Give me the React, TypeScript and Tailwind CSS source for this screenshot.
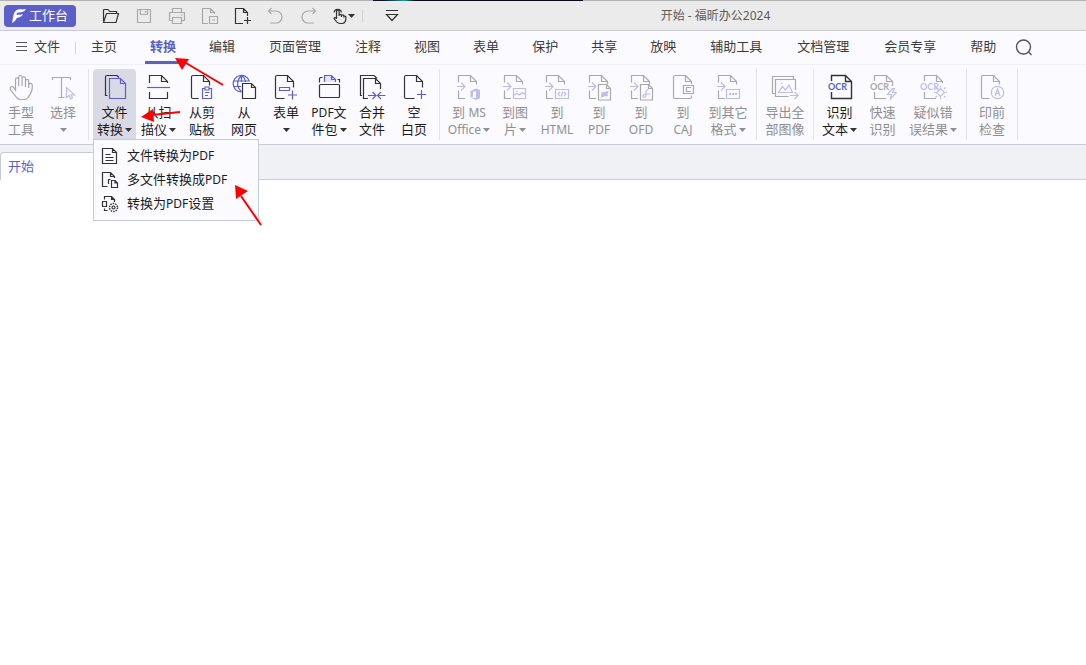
import type { ReactNode } from 'react'

const INK = '#333333'
const BLUE = '#5b5fc7'
const GRAY = '#a9a9ac'
const LILAC = '#bcbdea'

type Item = {
  lines: string[]
  icon: ReactNode
  width: string
  caret?: boolean
  disabled?: boolean
  active?: boolean
}

// latin runs are set one size smaller than the Chinese text around them
function Mixed({ text }: { text: string }) {
  return (
    <span>
      {text.split(/([A-Za-z]+)/).map((part, i) =>
        i % 2 ? <span key={i} className="text-[12px]">{part}</span> : part
      )}
    </span>
  )
}

function Caret({ className = '' }: { className?: string }) {
  return (
    <svg width="7" height="4" viewBox="0 0 7 4" className={className} fill="currentColor" aria-hidden="true">
      <path d="M0 0h7L3.5 4z" />
    </svg>
  )
}

function Icon({ size = 28, color = INK, children }: { size?: number; color?: string; children: ReactNode }) {
  return (
    <svg
      width={size}
      height={size}
      viewBox={`0 0 ${size} ${size}`}
      fill="none"
      stroke={color}
      strokeWidth="1.2"
      className="shrink-0"
      aria-hidden="true"
    >
      {children}
    </svg>
  )
}

// page with a folded corner, left open at the bottom right for a badge
function Page({ x = 3.5, foot = 7, right = 10 }: { x?: number; foot?: number; right?: number }) {
  return (
    <g transform={`translate(${x} 2.5)`}>
      <path d={`M18 ${right}V6L12 0H1.5Q0 0 0 1.5V21.5Q0 23 1.5 23H${foot}`} />
      <path d="M12 0V6H18" />
    </g>
  )
}

// page with an arrow entering from the left
function Export({ x = 3.5 }: { x?: number }) {
  return (
    <>
      <g transform={`translate(${x} 2.5)`}>
        <path d="M0 7V0H12L18 6V9M12 0V6H18M0 15V23H6.5" />
      </g>
      <path d={`M${x - 1.5} 13.5h8M${x + 2.5} 9.5l4 4-4 4`} stroke={LILAC} />
    </>
  )
}

function Ocr({ x = 1, color }: { x?: number; color: string }) {
  return (
    <text
      x={x}
      y="17"
      fontSize="9"
      fontWeight="700"
      fontFamily="Lato, sans-serif"
      fill={color}
      stroke="none"
    >
      OCR
    </text>
  )
}

const groups: Item[][] = [
  [
    {
      lines: ['手型', '工具'],
      width: 'w-[42px]',
      disabled: true,
      icon: (
        <Icon color={GRAY}>
          <path d="M8.5 15V6.5a1.6 1.6 0 0 1 3.2 0V13M11.7 7V4.2a1.7 1.7 0 0 1 3.4 0V13M15.1 5.5a1.7 1.7 0 0 1 3.4 0V14M18.5 8a1.6 1.6 0 0 1 3.2 0V15M21.7 12.5a1.8 1.8 0 0 1 3.6-.5c.3 5-1.3 9-4.3 12.5-1 1.4-2 2-3.5 2h-4c-2 0-3.2-.8-4.2-2.3L3.6 17c-.8-1.4-.4-2.8.7-3.2 1.2-.4 2.3.2 3 1.4l1.2 2V14" />
        </Icon>
      ),
    },
    {
      lines: ['选择'],
      width: 'w-[42px]',
      caret: true,
      disabled: true,
      icon: (
        <Icon color={GRAY}>
          <path d="M3.5 7V4.5H21.5V7M12.5 4.5V24.5M9.5 24.5H15.5" />
          <path d="M17.5 14.5v10l2.5-2 1.5 3.5 2-1-1.5-3.2h3.5z" stroke={LILAC} />
        </Icon>
      ),
    },
  ],
  [
    {
      lines: ['文件', '转换'],
      width: 'w-[43px]',
      caret: true,
      active: true,
      icon: (
        <Icon>
          <path d="M16 2.5H6Q4.5 2.5 4.5 4V22.5H6.5M16 2.5L18 4.5" />
          <path d="M8.5 5.5H19.5L24.5 10.5V25.5H8.5zM19.5 5.5V10.5H24.5" stroke={BLUE} />
        </Icon>
      ),
    },
    {
      lines: ['从扫', '描仪'],
      width: 'w-[45px]',
      caret: true,
      icon: (
        <Icon>
          <path d="M4.5 10V2.5H16.5L22.5 8.5V10M16.5 2.5V8.5H22.5M4.5 19V25.5H22.5V19" />
          <path d="M2 14.5H25" stroke={BLUE} />
        </Icon>
      ),
    },
    {
      lines: ['从剪', '贴板'],
      width: 'w-[42px]',
      icon: (
        <Icon>
          <Page />
          <path d="M17 15.5H14.5V25.5H23.5V15.5H21M17 14h4v3h-4zM17 19.5h4.5M17 22.5h3" stroke={BLUE} />
        </Icon>
      ),
    },
    {
      lines: ['从', '网页'],
      width: 'w-[42px]',
      icon: (
        <Icon>
          <g stroke={BLUE}>
            <path d="M19.5 8.5A8.3 8.3 0 1 0 11 19M3.5 8H19M3.5 13.5H11M11.5 2.5V9" />
            <path d="M15.5 9c-.5-3-2-5.5-4-6.5-5 5-5 11 0 16.5" />
          </g>
          <path d="M12.5 10.5H21.5L25.5 14.5V25.5H12.5zM21.5 10.5V14.5H25.5" />
        </Icon>
      ),
    },
    {
      lines: ['表单'],
      width: 'w-[42px]',
      caret: true,
      icon: (
        <Icon>
          <Page foot={9} right={12} />
          <path d="M7.5 14.5h10v3h-10zM20.5 17.5v9M16 22h9" stroke={BLUE} />
        </Icon>
      ),
    },
    {
      lines: ['PDF文', '件包'],
      width: 'w-[44px]',
      caret: true,
      icon: (
        <Icon>
          <rect x="4.5" y="11.5" width="20" height="13" rx="1" />
          <path d="M4.5 9.5V5.5Q4.5 4.5 5.5 4.5H7.5M24.5 9.5V6.5H22.5" />
          <path d="M9.5 9V2.5H16.5L20.5 6.5V9M16.5 2.5V6.5H20.5" stroke={BLUE} fill="#e4e4fb" />
        </Icon>
      ),
    },
    {
      lines: ['合并', '文件'],
      width: 'w-[42px]',
      icon: (
        <Icon>
          <path d="M16 2.5H2.5V22.5H4M16 2.5L19 5.5" />
          <path d="M10 25.5H5.5V5.5H17.5L22.5 10.5V16M17.5 5.5V10.5H22.5" />
          <path d="M10 22.5h8M14.5 19l3.5 3.5-3.5 3.5M27.5 22.5h-8M23 19l-3.5 3.5 3.5 3.5" stroke={BLUE} />
        </Icon>
      ),
    },
    {
      lines: ['空', '白页'],
      width: 'w-[42px]',
      icon: (
        <Icon>
          <Page x={4.5} foot={10} right={12} />
          <path d="M21.5 17v9M17 21.5h9" stroke={BLUE} />
        </Icon>
      ),
    },
  ],
  [
    {
      lines: ['到 MS', 'Office'],
      width: 'w-[50px]',
      caret: true,
      disabled: true,
      icon: (
        <Icon color={GRAY}>
          <Export />
          <path d="M15.5 18L21 15.5l4 1.5v8.5L21 27l-5.5-2.5 5.5.5v-7l-3 1v4.5l-2.5 1z" fill={LILAC} stroke="none" />
        </Icon>
      ),
    },
    {
      lines: ['到图', '片'],
      width: 'w-[42px]',
      caret: true,
      disabled: true,
      icon: (
        <Icon color={GRAY}>
          <Export />
          <path d="M12.5 15.5h12v10h-12zM12.5 22.5l3-2 3 1.5 3-2.5 3 2M16 17.5v1.5" stroke={LILAC} />
        </Icon>
      ),
    },
    {
      lines: ['到', 'HTML'],
      width: 'w-[42px]',
      disabled: true,
      icon: (
        <Icon color={GRAY}>
          <Export />
          <path d="M12.5 16.5h13v9h-13zM17 19l-2 2 2 2M21 19l2 2-2 2M19.8 18.5l-1.6 5" stroke={LILAC} />
        </Icon>
      ),
    },
    {
      lines: ['到', 'PDF'],
      width: 'w-[42px]',
      disabled: true,
      icon: (
        <Icon color={GRAY}>
          <Export x={4.5} />
          <path d="M13.5 11.5H21.5L25.5 15.5V27H13.5zM21.5 11.5V15.5H25.5" />
          <path d="M15 25c1.5-1.5 1-3 1.5-4.5l-.5-1.5c2 .5 5 0 8-1.5-1 1.5-1 2.5-1.5 4l.5 2c-2-.5-5 0-8 1.5z" fill={LILAC} stroke="none" />
        </Icon>
      ),
    },
    {
      lines: ['到', 'OFD'],
      width: 'w-[42px]',
      disabled: true,
      icon: (
        <Icon color={GRAY}>
          <Export x={4.5} />
          <path d="M13.5 11.5H21.5L25.5 15.5V27H13.5zM21.5 11.5V15.5H25.5" />
          <path d="M21.5 16.5c-2 0-2.5 1-2.5 3v3c0 2-3 2.5-3 .5s1.5-2 3-2h4.5" stroke={LILAC} />
        </Icon>
      ),
    },
    {
      lines: ['到', 'CAJ'],
      width: 'w-[42px]',
      disabled: true,
      icon: (
        <Icon color={GRAY}>
          <path d="M22.5 11V8.5L16.5 2.5H6Q4.5 2.5 4.5 4V23.5Q4.5 25.5 6 25.5H21Q22.5 25.5 22.5 24V22.5M16.5 2.5V8.5H22.5" />
          <path d="M14.5 12.5h10v8h-10zM22 14.5h-4.5v4H22" />
        </Icon>
      ),
    },
    {
      lines: ['到其它', '格式'],
      width: 'w-[48px]',
      caret: true,
      disabled: true,
      icon: (
        <Icon color={GRAY}>
          <Export x={4.5} />
          <path d="M12.5 16.5h13v9h-13z" stroke={LILAC} />
          <path d="M15 20h2v2h-2zM18 20h2v2h-2zM21 20h2v2h-2z" fill={LILAC} stroke="none" />
        </Icon>
      ),
    },
  ],
  [
    {
      lines: ['导出全', '部图像'],
      width: 'w-[48px]',
      disabled: true,
      icon: (
        <Icon color={GRAY}>
          <path d="M4 20.5H1.5V3.5H22.5V6" />
          <path d="M17.5 23.5H4.5V6.5H24.5V17" />
          <path d="M7.5 19.5l4-6 3 3.5 3.5-5 3.5 7.5zM10 10.5h1.5M19 22.5h8M23.5 19l3.5 3.5-3.5 3.5" stroke={LILAC} />
        </Icon>
      ),
    },
  ],
  [
    {
      lines: ['识别', '文本'],
      width: 'w-[43px]',
      caret: true,
      icon: (
        <Icon>
          <path d="M5.5 8V2.5H19.5L25.5 8.5V25.5H5.5V19M19.5 2.5V8.5H25.5" strokeWidth="1.4" />
          <Ocr x={2} color={BLUE} />
        </Icon>
      ),
    },
    {
      lines: ['快速', '识别'],
      width: 'w-[43px]',
      disabled: true,
      icon: (
        <Icon color={GRAY}>
          <path d="M5.5 8V2.5H17.5L23.5 8.5V13M17.5 2.5V8.5H23.5M5.5 19V25.5H17" />
          <Ocr color={GRAY} />
          <path d="M23.5 15.5l-5 6h4l-1 4.5 6-6.5h-4l2-4z" stroke={LILAC} />
        </Icon>
      ),
    },
    {
      lines: ['疑似错', '误结果'],
      width: 'w-[58px]',
      caret: true,
      disabled: true,
      icon: (
        <Icon color={GRAY}>
          <path d="M5.5 8V2.5H17.5L23.5 8.5V10M17.5 2.5V8.5H23.5M5.5 19V25.5H17" />
          <Ocr color={LILAC} />
          <g stroke={LILAC}>
            <path d="M21.5 15.5l4 4-4 4-4-4z" />
            <path d="M21.5 13v1.5M21.5 24.5v2M15 19.5h1.5M26.5 19.5h1.5M16.5 14.5l1.5 1.5M25 23l1.5 1.5M26.5 14.5l-1.5 1.5M18 23l-1.5 1.5" />
          </g>
        </Icon>
      ),
    },
  ],
  [
    {
      lines: ['印前', '检查'],
      width: 'w-[42px]',
      disabled: true,
      icon: (
        <Icon color={GRAY}>
          <Page foot={8} right={9} />
          <circle cx="19.5" cy="19.5" r="6.2" stroke={LILAC} />
          <path d="M17 23l2.5-7 2.5 7M18 20.5h3" stroke={LILAC} />
        </Icon>
      ),
    },
  ],
]

const quickActions: { label: string; icon: ReactNode; off?: boolean }[] = [
  {
    label: '打开',
    icon: <path d="M1.5 14V3.5Q1.5 2.5 2.5 2.5H6L7.5 4.5H14.5V6.5M1.5 15.5L4.5 6.5H16.5L14 15.5z" />,
  },
  { label: '保存', off: true, icon: <path d="M2.5 2.5h13v13h-13zM5.5 2.5v5h7v-5M10.5 4v2" /> },
  {
    label: '打印',
    off: true,
    icon: <path d="M4.5 5.5v-4h9v4M4.5 13.5h-3v-8h15v8h-3M4.5 10.5h9v6h-9zM13 8h1.5" />,
  },
  {
    label: '页面',
    off: true,
    icon: <path d="M7 16.5H1.5V1.5H9.5L13.5 5.5V7M9.5 1.5V5.5H13.5M8.5 9.5h8v7h-8zM11 13h3" />,
  },
  { label: '新建', icon: <path d="M9 16.5H1.5V1.5H9.5L13.5 5.5V9M9.5 1.5V5.5H13.5M13.5 10v7M10 13.5h7" /> },
  { label: '撤销', off: true, icon: <path d="M4.5 1L1.5 4l3 3M1.5 4H9a6 6 0 0 1 0 12H3" /> },
  { label: '重做', off: true, icon: <path d="M12.5 1l3 3-3 3M15.5 4H8a6 6 0 0 0 0 12h6" /> },
]

const tabs = [
  '主页', '转换', '编辑', '页面管理', '注释', '视图', '表单', '保护',
  '共享', '放映', '辅助工具', '文档管理', '会员专享', '帮助',
]

const menuItems: { label: string; icon: ReactNode }[] = [
  {
    label: '文件转换为PDF',
    icon: <path d="M1.5 1.5H11.5L15.5 5.5V16.5H1.5zM11.5 1.5V5.5H15.5M4.5 7.5h5M4.5 10.5h8M4.5 13.5h8" />,
  },
  {
    label: '多文件转换成PDF',
    icon: (
      <path d="M6.5 15.5H1.5V1.5H9.5L13.5 5.5V7M9.5 1.5V5.5H13.5M7.5 13V8.5H9.5M10.5 9.5H14L16.5 12V16.5H10.5zM14 9.5V12H16.5" />
    ),
  },
  {
    label: '转换为PDF设置',
    icon: (
      <>
        <path d="M3.5 4.5V1.5H10.5L13.5 4.5V7M10.5 1.5V4.5H13.5M1.5 6.5h4v5h-4zM3.5 13.5v2h3" />
        <circle cx="12.5" cy="12.5" r="4" strokeWidth="1.5" strokeDasharray="1.5 1" />
        <circle cx="12.5" cy="12.5" r="1.5" />
      </>
    ),
  },
]

function RibbonButton({ item }: { item: Item }) {
  const [first, second] = item.lines
  return (
    <button
      disabled={item.disabled}
      className={`${item.width} flex h-[71px] flex-col items-center pt-1 whitespace-nowrap ${
        item.active ? 'rounded-t-sm bg-[#d9dae5]' : ''
      } ${item.disabled ? 'text-[#8f8f92]' : 'text-[#1c1c1c]'}`}
    >
      {item.icon}
      <span className="mt-[3px] h-[17px] leading-[17px]"><Mixed text={first} /></span>
      <span className="flex h-[17px] items-center gap-[2px] leading-[17px]">
        {second && <Mixed text={second} />}
        {item.caret && <Caret className={item.disabled ? '' : 'text-[#333333]'} />}
      </span>
    </button>
  )
}

function TitleBar() {
  return (
    <header className="flex h-[31px] items-center border-t border-b border-t-[#b3b1b1] border-b-[#c6cad9] bg-[#ebebeb]">
      <button className="ml-1 flex h-[22px] w-[72px] items-center gap-[3px] rounded bg-[#5b5fc7] pl-2 text-white">
        <svg width="14" height="14" viewBox="0 0 14 14" fill="#fff" aria-hidden="true">
          <path d="M0 14C1.5 8 1 2 6 .5 8.5 0 11 .8 14 0 13 2.5 10.5 3.2 6.5 3.5c-1.5 0-2 1-2 2.2 2 .3 4 0 6.5-.5-1 2.3-3.5 3.3-6 3.5C4 10.8 2.5 12.8 0 14z" />
        </svg>
        工作台
      </button>
      <div className="ml-[26px] flex items-center gap-[15px]">
        {quickActions.map(a => (
          <button key={a.label} aria-label={a.label} disabled={a.off}>
            <Icon size={18} color={a.off ? GRAY : INK}>{a.icon}</Icon>
          </button>
        ))}
      </div>
      <button aria-label="手型" className="ml-3 flex items-center text-[#333333]">
        <Icon size={18}>
          <path d="M6.5 12V4.5a1.3 1.3 0 0 1 2.6 0V9M9.1 8.5a1.2 1.2 0 0 1 2.4 0V10M11.5 9a1.2 1.2 0 0 1 2.4 0v1.5M13.9 10a1 1 0 0 1 2 0c.1 3-.2 6-3.4 6.5h-3c-2.5 0-3.5-2.5-5.5-5 .5-1.5 1.8-1 2.5 0M4 5.5a3.8 3.8 0 0 1 7.5 0" />
        </Icon>
        <Caret />
      </button>
      <span className="ml-[7px] h-3 w-px bg-[#cfcfcf]" />
      <button aria-label="自定义" className="ml-5">
        <Icon size={18}>
          <path d="M3 3.5h12M3.5 7.5L9 13.5l5.5-6z" />
        </Icon>
      </button>
      <h1 className="flex-1 pr-14 text-center text-xs text-[#5a5a5a]">开始 - 福昕办公2024</h1>
    </header>
  )
}

function TabRow() {
  return (
    <nav className="flex h-[34px] items-center border-b border-[#f0f0f5] bg-[#fbfbff] whitespace-nowrap text-[#3c3c3c]">
      <button className="ml-4 flex items-center gap-[7px] pb-px">
        <svg width="11" height="10" viewBox="0 0 11 10" stroke="#555" aria-hidden="true">
          <path d="M0 .5h11M0 4.5h11M0 8.5h11" />
        </svg>
        文件
      </button>
      <span className="ml-[15px] h-3 w-px bg-[#d5d5dc]" />
      <div className="ml-[15px] flex h-full gap-[33px]">
        {tabs.map(t => (
          <button
            key={t}
            className={`${
              t === '转换'
                ? '-mx-[5px] border-b-[3px] border-[#5b5fc7] px-[5px] pt-px font-bold text-[#5b5fc7]'
                : 'pb-[2px]'
            } ${t.length === 4 ? 'mx-px' : ''}`}
          >
            {t}
          </button>
        ))}
      </div>
      <button aria-label="搜索" className="ml-[19px]">
        <Icon size={18} color="#555555">
          <circle cx="8.5" cy="8" r="7" strokeWidth="1.4" />
          <path d="M13.5 13l3 3" strokeWidth="1.4" />
        </Icon>
      </button>
    </nav>
  )
}

function ConvertMenu() {
  return (
    <ul className="absolute top-[139px] left-[93px] w-[166px] border border-[#c6cad9] bg-[#fbfbff] py-1">
      {menuItems.map(m => (
        <li key={m.label}>
          <button className="flex h-6 w-full items-center gap-2 pl-[7px] whitespace-nowrap text-[#1c1c1c]">
            <Icon size={18}>{m.icon}</Icon>
            <Mixed text={m.label} />
          </button>
        </li>
      ))}
    </ul>
  )
}

function Arrows() {
  return (
    <svg width="280" height="240" className="pointer-events-none absolute top-0 left-0" stroke="#fe0000" fill="#fe0000" aria-hidden="true">
      <path d="M223 85L186 63M180 112L152 115M261 225L241 196" strokeWidth="2" />
      <path d="M175 58L189 59L182 70zM141 117L153 109L154 122zM235 185L248 191L236 199z" stroke="none" />
    </svg>
  )
}

export default function App() {
  return (
    <div className="relative min-h-screen overflow-hidden bg-white font-['Noto_Sans','Noto_Sans_CJK_SC',sans-serif] text-[13px]">
      <TitleBar />
      <div className="absolute top-0 left-[373px] h-px w-[210px] bg-linear-to-r from-[#0b1230] from-5% via-[#12a59c] via-15% to-[#060a1e] to-20%" />
      <TabRow />
      <div className="flex h-20 items-start border-b border-[#c6cad9] bg-[#fbfbff] pt-1">
        {groups.map((group, i) => (
          <div key={i} className="flex">
            {group.map(item => (
              <RibbonButton key={item.lines.join('')} item={item} />
            ))}
            <span className="mx-1 h-[71px] w-px bg-[#e2e3ec]" />
          </div>
        ))}
      </div>
      <div className="flex h-[35px] items-end border-b border-[#c6cad9] bg-[#f0f1f5]">
        <button className="-mb-px h-7 w-[150px] rounded-t border border-b-0 border-[#c6cad9] bg-white pl-[7px] text-left text-[#5b5fc7]">
          开始
        </button>
      </div>
      <ConvertMenu />
      <Arrows />
    </div>
  )
}
